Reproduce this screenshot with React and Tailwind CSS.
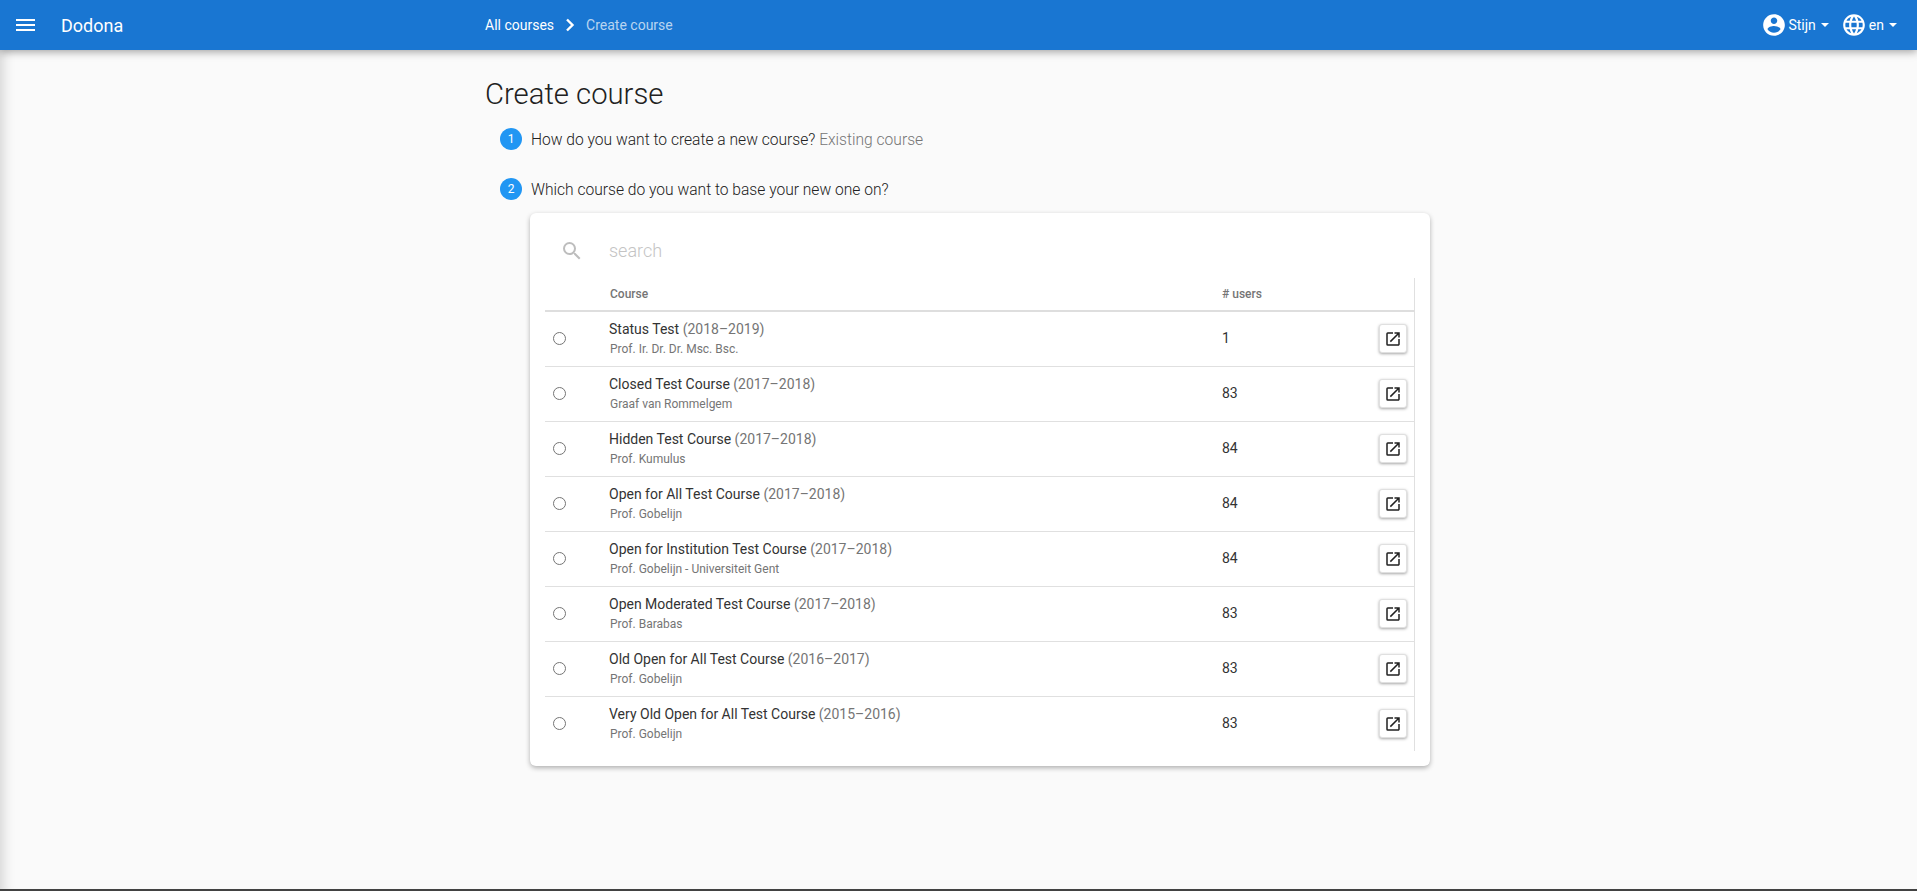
import React from "react";

const courses = [
  ["Status Test", "(2018–2019)", "Prof. Ir. Dr. Dr. Msc. Bsc.", "1"],
  ["Closed Test Course", "(2017–2018)", "Graaf van Rommelgem", "83"],
  ["Hidden Test Course", "(2017–2018)", "Prof. Kumulus", "84"],
  ["Open for All Test Course", "(2017–2018)", "Prof. Gobelijn", "84"],
  ["Open for Institution Test Course", "(2017–2018)", "Prof. Gobelijn - Universiteit Gent", "84"],
  ["Open Moderated Test Course", "(2017–2018)", "Prof. Barabas", "83"],
  ["Old Open for All Test Course", "(2016–2017)", "Prof. Gobelijn", "83"],
  ["Very Old Open for All Test Course", "(2015–2016)", "Prof. Gobelijn", "83"],
];

const Icon = ({ d, size = 24, className = "" }) => (
  <svg width={size} height={size} viewBox="0 0 24 24" fill="currentColor" className={className}>
    <path d={d} />
  </svg>
);

const Caret = () => (
  <svg width="8" height="4" viewBox="0 0 8 4" fill="white" className="ml-[5px]">
    <path d="M0 0h8L4 4z" />
  </svg>
);

const Step = ({ n, children }) => (
  <div className="flex items-center h-[22px] pl-[15px]">
    <span className="w-[22px] h-[22px] rounded-full bg-[#2196f3] text-white text-[12px] flex items-center justify-center shrink-0">
      {n}
    </span>
    <span className="ml-[9px] pt-[4px] text-[15.6px] font-light text-[#212121]">{children}</span>
  </div>
);

export default function App() {
  return (
    <div className="h-screen flex flex-col overflow-hidden bg-[#fafafa] font-['Roboto',sans-serif]">
      <header className="relative z-10 h-[50px] shrink-0 bg-[#1976d2] text-white flex items-center shadow-[0_2px_8px_rgba(0,0,0,0.35)]">
        <div className="w-[485px] shrink-0 flex items-center pl-[16px]">
          <svg width="19" height="12" viewBox="0 0 19 12" fill="white">
            <rect width="19" height="2" y="0" />
            <rect width="19" height="2" y="5" />
            <rect width="19" height="2" y="10" />
          </svg>
          <span className="ml-[26px] text-[18px]">Dodona</span>
        </div>
        <nav className="flex items-center text-[14px]">
          <span>All courses</span>
          <svg width="12" height="14" viewBox="0 0 12 14" fill="none" stroke="white" strokeWidth="2.4" className="ml-[10px]">
            <path d="M3 1.5 8.5 7 3 12.5" />
          </svg>
          <span className="ml-[10px] text-white/70">Create course</span>
        </nav>
        <div className="ml-auto flex items-center text-[14px] pr-[20px]">
          <Icon size={26} d="M12 2C6.48 2 2 6.48 2 12s4.48 10 10 10 10-4.48 10-10S17.52 2 12 2zm0 3c1.66 0 3 1.34 3 3s-1.34 3-3 3-3-1.34-3-3 1.34-3 3-3zm0 14.2c-2.5 0-4.71-1.28-6-3.22.03-1.99 4-3.08 6-3.08 1.99 0 5.97 1.09 6 3.08-1.29 1.94-3.5 3.22-6 3.22z" />
          <span className="ml-[1px]">Stijn</span>
          <Caret />
          <Icon size={26} className="ml-[12px]" d="M11.99 2C6.47 2 2 6.48 2 12s4.47 10 9.99 10C17.52 22 22 17.52 22 12S17.52 2 11.99 2zm6.93 6h-2.95c-.32-1.25-.78-2.45-1.38-3.56 1.84.63 3.37 1.91 4.33 3.56zM12 4.04c.83 1.2 1.48 2.53 1.91 3.96h-3.82c.43-1.43 1.08-2.76 1.91-3.96zM4.26 14C4.1 13.36 4 12.69 4 12s.1-1.36.26-2h3.38c-.08.66-.14 1.32-.14 2 0 .68.06 1.34.14 2H4.26zm.82 2h2.95c.32 1.25.78 2.45 1.38 3.56-1.84-.63-3.37-1.9-4.33-3.56zm2.95-8H5.08c.96-1.66 2.49-2.93 4.33-3.56C8.81 5.55 8.35 6.75 8.03 8zM12 19.96c-.83-1.2-1.48-2.53-1.91-3.96h3.82c-.43 1.43-1.08 2.76-1.91 3.96zM14.34 14H9.66c-.09-.66-.16-1.32-.16-2 0-.68.07-1.35.16-2h4.68c.09.65.16 1.32.16 2 0 .68-.07 1.34-.16 2zm.25 5.56c.6-1.11 1.06-2.31 1.38-3.56h2.95c-.96 1.65-2.49 2.93-4.33 3.56zM16.36 14c.08-.66.14-1.32.14-2 0-.68-.06-1.34-.14-2h3.38c.16.64.26 1.31.26 2s-.1 1.36-.26 2h-3.38z" />
          <span className="ml-[2px]">en</span>
          <Caret />
        </div>
      </header>

      <main className="flex-1 min-h-0 shadow-[inset_14px_0_14px_-12px_rgba(0,0,0,0.18)]">
        <div className="mx-auto w-[947px]">
          <h1 className="mt-[26px] text-[29.25px] leading-[36px] font-light text-[#212121]">Create course</h1>
          <div className="mt-[16px]">
            <Step n="1">
              How do you want to create a new course? <span className="text-[#757575]">Existing course</span>
            </Step>
          </div>
          <div className="mt-[28px]">
            <Step n="2">Which course do you want to base your new one on?</Step>
          </div>
          <section className="ml-[45px] mt-[13px] w-[900px] h-[553px] rounded-[6px] bg-white px-[15px] shadow-[0_2px_5px_rgba(0,0,0,0.3)]">
            <div className="h-[65px] flex items-center pl-[15px] pt-[10px] text-[#bdbdbd]">
              <Icon d="M15.5 14h-.79l-.28-.27A6.47 6.47 0 0 0 16 9.5 6.5 6.5 0 1 0 9.5 16c1.61 0 3.09-.59 4.23-1.57l.27.28v.79l5 4.99L20.49 19l-4.99-5zm-6 0C7.01 14 5 11.99 5 9.5S7.01 5 9.5 5 14 7.01 14 9.5 11.99 14 9.5 14z" />
              <span className="ml-[25px] text-[18px] font-light text-[#c4c4c4]">search</span>
            </div>
            <table className="w-full table-fixed border-r border-[#e0e0e0] border-collapse">
              <colgroup>
                <col className="w-[65px]" />
                <col className="w-[612px]" />
                <col />
                <col className="w-[60px]" />
              </colgroup>
              <thead>
                <tr className="h-[33px] border-b-2 border-[#dedede] text-left text-[12px] font-medium text-[#757575]">
                  <th></th>
                  <th className="font-medium">Course</th>
                  <th className="font-medium"># users</th>
                  <th></th>
                </tr>
              </thead>
              <tbody>
                {courses.map(([name, year, teacher, users], i) => (
                  <tr key={name} className={`h-[55px] ${i < courses.length - 1 ? "border-b border-[#e0e0e0]" : ""}`}>
                    <td className="pl-[8px]">
                      <span className="block w-[13px] h-[13px] rounded-full border border-[#757575]" />
                    </td>
                    <td>
                      <div className="text-[14px] leading-[18px] font-normal text-[#333333] -mt-[1px] -ml-[1px]">
                        {name} <span className="text-[#757575]">{year}</span>
                      </div>
                      <div className="mt-[3px] text-[12px] leading-[16px] text-[#757575]">{teacher}</div>
                    </td>
                    <td className="text-[14px] text-[#333333]">{users}</td>
                    <td>
                      <button className="w-[28px] h-[29px] ml-[24px] flex items-center justify-center rounded-[3px] border border-[#e0e0e0] bg-white text-[#212121] shadow-[0_1px_3px_rgba(0,0,0,0.35)]">
                        <Icon size={18} d="M19 19H5V5h7V3H5a2 2 0 0 0-2 2v14a2 2 0 0 0 2 2h14c1.1 0 2-.9 2-2v-7h-2v7zM14 3v2h3.59l-9.83 9.83 1.41 1.41L19 6.41V10h2V3h-7z" />
                      </button>
                    </td>
                  </tr>
                ))}
              </tbody>
            </table>
          </section>
        </div>
      </main>
      <div className="h-[2px] shrink-0 bg-[#424242]" />
    </div>
  );
}
